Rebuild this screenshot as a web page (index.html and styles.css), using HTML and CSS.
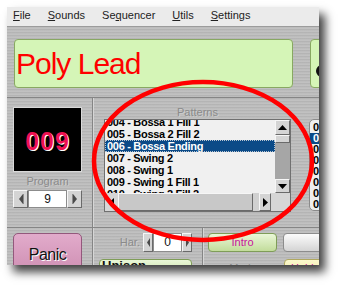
FILE: index.html
```html
<!DOCTYPE html>
<html lang="en">
<head>
	<meta charset="UTF-8">
	<title>Poly Lead</title>
	<link rel="stylesheet" href="styles.css">
</head>
<body>
<div class="shot">
	<div class="window">
		<div class="menubar">
			<span><u>F</u>ile</span>
			<span><u>S</u>ounds</span>
			<span>Se<u>q</u>uencer</span>
			<span><u>U</u>tils</span>
			<span><u>S</u>ettings</span>
		</div>

		<div class="top">
			<div class="lcd lcd-name">Poly Lead</div>
			<div class="lcd lcd-aux"><span class="knob"></span></div>
		</div>

		<div class="middle">
			<div class="prog-panel">
				<div class="prog-led">009</div>
				<div class="caption">Program</div>
				<div class="spin">
					<span class="bevel spin-btn"><svg width="6" height="12"><polygon points="5,1 1,6 5,11" fill="#4a4a4a"/><line x1="5.5" y1="1" x2="5.5" y2="11" stroke="#8a8a8a"/></svg></span>
					<span class="spin-val">9</span>
					<span class="bevel spin-btn"><svg width="6" height="12"><polygon points="1,1 5,6 1,11" fill="#4a4a4a"/><line x1="0.5" y1="1" x2="0.5" y2="11" stroke="#8a8a8a"/></svg></span>
				</div>
			</div>

			<div class="pat-panel">
				<div class="pat-col">
					<div class="caption">Patterns</div>
					<div class="listbox">
						<div class="lb-top">
							<div class="lb-rows">
								<div class="row">004 - Bossa 1 Fill 1</div>
								<div class="row">005 - Bossa 2 Fill 2</div>
								<div class="row sel">006 - Bossa Ending</div>
								<div class="row">007 - Swing 2</div>
								<div class="row">008 - Swing 1</div>
								<div class="row">009 - Swing 1 Fill 1</div>
								<div class="row">010 - Swing 2 Fill 2</div>
							</div>
							<div class="vscroll">
								<span class="bevel sb-up"><svg width="9" height="5"><polygon points="0,5 4.5,0 9,5" fill="#000"/></svg></span>
								<span class="bevel sb-thumb"></span>
								<span class="sb-track"></span>
								<span class="bevel sb-down"><svg width="9" height="5"><polygon points="0,0 4.5,5 9,0" fill="#000"/></svg></span>
							</div>
						</div>
						<div class="hscroll">
							<span class="sb-left"><svg width="5" height="9"><polygon points="5,0 0,4.5 5,9" fill="#000"/></svg></span>
							<span class="bevel sb-hthumb"></span>
							<span class="sb-htrack"></span>
							<span class="bevel sb-right"><svg width="5" height="9"><polygon points="0,0 5,4.5 0,9" fill="#000"/></svg></span>
							<span class="sb-corner"></span>
						</div>
					</div>
				</div>
				<div class="list2">
					<div class="row2">000 - Intro</div>
					<div class="row2">001 - Intro 2</div>
					<div class="row2 sel">002 - Main A</div>
					<div class="row2">003 - Main B</div>
					<div class="row2">004 - Fill A</div>
					<div class="row2">005 - Fill B</div>
					<div class="row2">006 - Break</div>
					<div class="row2">007 - Ending</div>
					<div class="row2">010 - Ending 2</div>
				</div>
			</div>
		</div>

		<div class="bottom">
			<div class="b-col1">
				<div class="panic">Panic</div>
			</div>
			<div class="b-col2">
				<div class="b-row">
					<span class="caption">Har.</span>
					<div class="spin spin-small">
						<span class="bevel spin-btn"><svg width="5" height="11"><polygon points="4,1 1,5.5 4,10" fill="#4a4a4a"/></svg></span>
						<span class="spin-val">0</span>
						<span class="bevel spin-btn"><svg width="5" height="11"><polygon points="1,1 4,5.5 1,10" fill="#4a4a4a"/></svg></span>
					</div>
				</div>
				<div class="btn btn-green btn-unison">Unison</div>
			</div>
			<div class="b-col3">
				<div class="b-row b-row-left">
					<div class="btn btn-green btn-intro">Intro</div>
					<div class="btn btn-white"></div>
				</div>
				<div class="b-row b-row-left b-row2">
					<span class="caption mode">Mode</span>
					<div class="btn btn-yellow">Hold</div>
				</div>
			</div>
		</div>
	</div>

	<svg class="ring" width="343" height="289">
		<ellipse cx="203" cy="161" rx="109" ry="79" fill="none" stroke="#f00" stroke-width="4.5"/>
	</svg>
</div>
</body>
</html>
```

FILE: styles.css
```css
body{
	margin:0;
	background:#fff;
	font-family:"Liberation Sans", Arial, sans-serif;
}
.shot{
	position:relative;
	width:343px;
	height:289px;
	padding:7px 0 0 7px;
	box-sizing:border-box;
	overflow:hidden;
}
.window{
	width:312px;
	height:258px;
	overflow:hidden;
	background:#bababa repeating-linear-gradient(180deg, rgba(255,255,255,.10) 0 1px, rgba(0,0,0,.03) 1px 2px, rgba(255,255,255,.04) 2px 3px);
	box-shadow:6px 7px 9px rgba(0,0,0,.75);
}

/* menu */
.menubar{
	display:flex;
	gap:17px;
	height:20px;
	box-sizing:border-box;
	padding-left:6px;
	background:#ebebeb;
	border-bottom:1px solid #9c9c9c;
	font-size:11px;
	line-height:17px;
	color:#222;
}

/* green displays */
.top{
	display:flex;
	gap:17px;
	padding:12px 0 9px 7px;
}
.lcd{
	flex:none;
	height:49px;
	box-sizing:border-box;
	background:#d5f5b7;
	border:1px solid #88a862;
	border-radius:4px;
}
.lcd-name{
	width:279px;
	padding-left:1px;
	color:#f00;
	font-size:30px;
	letter-spacing:-1px;
	line-height:47px;
	white-space:nowrap;
}
.lcd-aux{
	width:40px;
	padding:25px 0 0 5px;
}
.knob{
	display:block;
	width:12px;
	height:12px;
	border-radius:50%;
	background:#111;
}

/* middle */
.middle{
	display:flex;
	height:130px;
	box-sizing:border-box;
	border-top:1px solid #858585;
}
.prog-panel{
	width:86px;
	flex:none;
	box-sizing:border-box;
	border-right:1px solid #858585;
	padding:9px 10px 0 6px;
}
.prog-led{
	height:65px;
	box-sizing:border-box;
	border:1px solid #d9d9d9;
	background:#000;
	color:#f01050;
	font-weight:bold;
	font-size:25px;
	letter-spacing:1px;
	text-align:center;
	line-height:67px;
	text-shadow:1px 1px 0 #fff;
}
.caption{
	font-size:11px;
	line-height:13px;
	color:#8a8a8a;
	text-align:center;
	text-shadow:1px 1px 0 rgba(255,255,255,.3);
}
.prog-panel .caption{ margin-top:3px;}

.bevel{
	display:flex;
	align-items:center;
	justify-content:center;
	box-sizing:border-box;
	background:#d4d4d4;
	border:1px solid;
	border-color:#f6f6f6 #6a6a6a #6a6a6a #f6f6f6;
}
.spin{
	display:flex;
	height:18px;
	margin-top:2px;
}
.spin-btn{ width:15px; flex:none;}
.spin-val{
	flex:1;
	box-sizing:border-box;
	background:#fff;
	border:1px solid #8c8c8c;
	font-size:12px;
	line-height:16px;
	text-align:center;
	color:#111;
}
.spin-small{
	width:49px;
	height:19px;
	margin:0;
}
.spin-small .spin-btn{ width:10px;}
.spin-small .spin-val{ line-height:17px;}

/* patterns */
.pat-panel{
	flex:1;
	display:flex;
	gap:18px;
	border-left:1px solid #d6d6d6;
	padding-left:10px;
}
.pat-col{
	width:187px;
	flex:none;
	padding-top:8px;
}
.listbox{
	height:93px;
	box-sizing:border-box;
	border:1px solid #707070;
	background:#f0f0f0;
	display:flex;
	flex-direction:column;
}
.lb-top{
	display:flex;
	height:73px;
}
.lb-rows{
	flex:1;
	overflow:hidden;
	padding-top:0;
}
.row{
	height:12px;
	padding-left:2px;
	font-size:11px;
	font-weight:bold;
	line-height:12px;
	letter-spacing:-.3px;
	white-space:nowrap;
	color:#000;
}
.row:first-child{ margin-top:-4px;}
.row.sel{
	background:#0b4a87;
	color:#fff;
	outline:1px dotted #b8c4d0;
	outline-offset:-1px;
}
.vscroll{
	width:15px;
	display:flex;
	flex-direction:column;
}
.sb-up{ height:15px;}
.sb-thumb{ height:8px;}
.sb-track{ flex:1; background:#a6a6a6;}
.sb-down{ height:14px;}
.hscroll{
	display:flex;
	height:18px;
	background:#d6d6d6;
}
.sb-left{
	width:13px;
	display:flex;
	align-items:center;
	justify-content:center;
}
.sb-hthumb{ width:135px; background:#c8c8c8;}
.sb-htrack{ width:6px; background:#d0d0d0;}
.sb-right{ width:12px;}
.sb-corner{ flex:1;}

.list2{
	width:60px;
	height:92px;
	margin-top:21px;
	box-sizing:border-box;
	border:1px solid #8a8a8a;
	border-radius:5px 0 0 5px;
	background:#efefef;
	overflow:hidden;
}
.row2{
	height:11px;
	padding-left:3px;
	font-size:11px;
	font-weight:bold;
	line-height:11px;
	white-space:nowrap;
}
.row2:first-child{ margin-top:-9px;}
.row2.sel{ background:#0b4a87; color:#fff;}

/* bottom */
.bottom{
	display:flex;
	height:38px;
	box-sizing:border-box;
	border-top:1px solid #858585;
}
.b-col1{
	width:86px;
	flex:none;
	box-sizing:border-box;
	border-right:1px solid #858585;
	padding:5px 0 0 6px;
}
.panic{
	width:69px;
	height:45px;
	box-sizing:border-box;
	border:1px solid #93587c;
	border-radius:5px;
	background:linear-gradient(#e2abcb, #cc8cb0);
	padding-top:12px;
	font-size:16px;
	letter-spacing:-.5px;
	line-height:18px;
	text-align:center;
	color:#111;
	text-shadow:1px 1px 0 #fff;
}
.b-col2{
	width:110px;
	flex:none;
	box-sizing:border-box;
	border-left:1px solid #d6d6d6;
	border-right:1px solid #858585;
	padding:5px 10px 0 5px;
}
.b-col3{
	flex:1;
	border-left:1px solid #d6d6d6;
	padding:5px 0 0 4px;
}
.b-row{
	display:flex;
	justify-content:flex-end;
	align-items:center;
	gap:3px;
	height:19px;
}
.b-row-left{
	justify-content:flex-start;
	gap:6px;
}
.b-row2{ margin-top:7px;}
.mode{ width:70px; flex:none;}

.btn{
	flex:none;
	box-sizing:border-box;
	border-radius:4px;
	font-size:11px;
	line-height:17px;
	text-align:center;
}
.btn-green{
	background:linear-gradient(#eaf7d8, #c2dc9b);
	border:1px solid #7f9d58;
}
.btn-intro{
	width:69px;
	height:19px;
	color:#c8109c;
}
.btn-white{
	width:60px;
	height:19px;
	background:linear-gradient(#fcfcfc, #d4d4d4);
	border:1px solid #8c8c8c;
}
.btn-unison{
	height:20px;
	margin-top:7px;
	padding-left:2px;
	text-align:left;
	font-size:13px;
	font-weight:bold;
	line-height:12px;
	color:#111;
}
.btn-yellow{
	width:60px;
	height:20px;
	padding-left:6px;
	background:linear-gradient(#fbf8cc, #eee59c);
	border:1px solid #b0a860;
	color:#c8109c;
	text-align:left;
}

.ring{
	position:absolute;
	left:0;
	top:0;
	pointer-events:none;
}
```
